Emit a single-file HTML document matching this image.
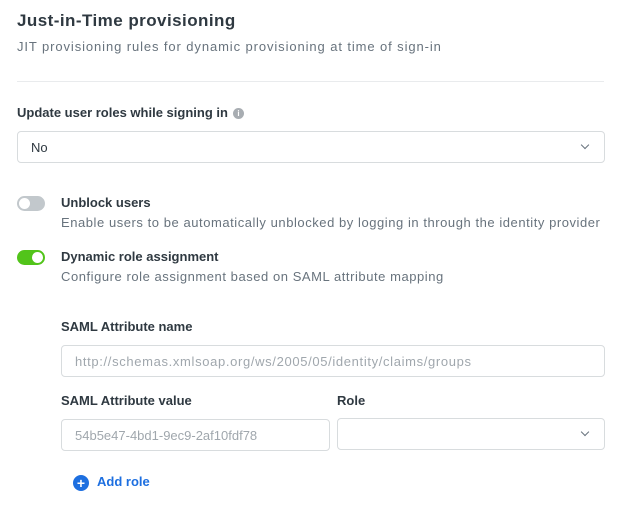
<!DOCTYPE html>
<html><head><style>
*{box-sizing:border-box;margin:0;padding:0}
body{width:634px;height:527px;background:#fff;font-family:"Liberation Sans",sans-serif;color:#2f3941;position:relative;overflow:hidden}
.a{position:absolute;white-space:nowrap}
.t{font-size:17px;font-weight:600;color:#2f3941;letter-spacing:0.45px}
.s{font-size:13px;color:#68737d;letter-spacing:0.55px}
.l{font-size:13px;font-weight:bold;color:#2f3941}
.box{position:absolute;border:1px solid #d8dcde;border-radius:4px;background:#fff}
.ph{font-size:13px;color:#a0a7ad}
.chev{position:absolute;width:6px;height:6px;border-right:1.5px solid #68737d;border-bottom:1.5px solid #68737d;transform:rotate(45deg)}
.tog{position:absolute;width:28px;height:15px;border-radius:8px}
.knob{position:absolute;top:2px;width:11px;height:11px;border-radius:50%;background:#fff}
</style></head><body>
<div class="a t" style="left:17px;top:11px">Just-in-Time provisioning</div>
<div class="a s" style="left:17px;top:39px;letter-spacing:0.9px">JIT provisioning rules for dynamic provisioning at time of sign-in</div>
<div class="a" style="left:17px;top:81px;width:587px;height:1px;background:#e9ebed"></div>
<div class="a l" style="left:17px;top:105px">Update user roles while signing in</div>
<div class="a" style="left:233px;top:108px;width:11px;height:11px;border-radius:50%;background:#a8adb2;color:#fff;font-size:8px;font-weight:bold;text-align:center;line-height:11px">i</div>
<div class="box" style="left:17px;top:131px;width:588px;height:32px"><span class="a" style="left:13px;top:8px;font-size:13px;color:#2f3941">No</span><div class="chev" style="left:564px;top:10px"></div></div>
<div class="tog" style="left:17px;top:196px;background:#c2c8cc"><div class="knob" style="left:2px"></div></div>
<div class="a l" style="left:61px;top:195px">Unblock users</div>
<div class="a s" style="left:61px;top:215px">Enable users to be automatically unblocked by logging in through the identity provider</div>
<div class="tog" style="left:17px;top:250px;background:#52c41a"><div class="knob" style="left:15px"></div></div>
<div class="a l" style="left:61px;top:249px">Dynamic role assignment</div>
<div class="a s" style="left:61px;top:269px">Configure role assignment based on SAML attribute mapping</div>
<div class="a l" style="left:61px;top:319px">SAML Attribute name</div>
<div class="box" style="left:61px;top:345px;width:544px;height:32px"><span class="a ph" style="left:13px;top:8px;letter-spacing:0.65px">http://schemas.xmlsoap.org/ws/2005/05/identity/claims/groups</span></div>
<div class="a l" style="left:61px;top:393px">SAML Attribute value</div>
<div class="a l" style="left:337px;top:393px">Role</div>
<div class="box" style="left:61px;top:419px;width:269px;height:32px"><span class="a ph" style="left:13px;top:8px">54b5e47-4bd1-9ec9-2af10fdf78</span></div>
<div class="box" style="left:337px;top:418px;width:268px;height:32px"><div class="chev" style="left:244px;top:10px"></div></div>
<div class="a" style="left:73px;top:475px;width:16px;height:16px;border-radius:50%;background:#1d6fe0;color:#fff;font-size:14px;font-weight:bold;text-align:center;line-height:16px">+</div>
<div class="a" style="left:97px;top:474px;font-size:13px;font-weight:600;color:#1d6fe0">Add role</div>
</body></html>
